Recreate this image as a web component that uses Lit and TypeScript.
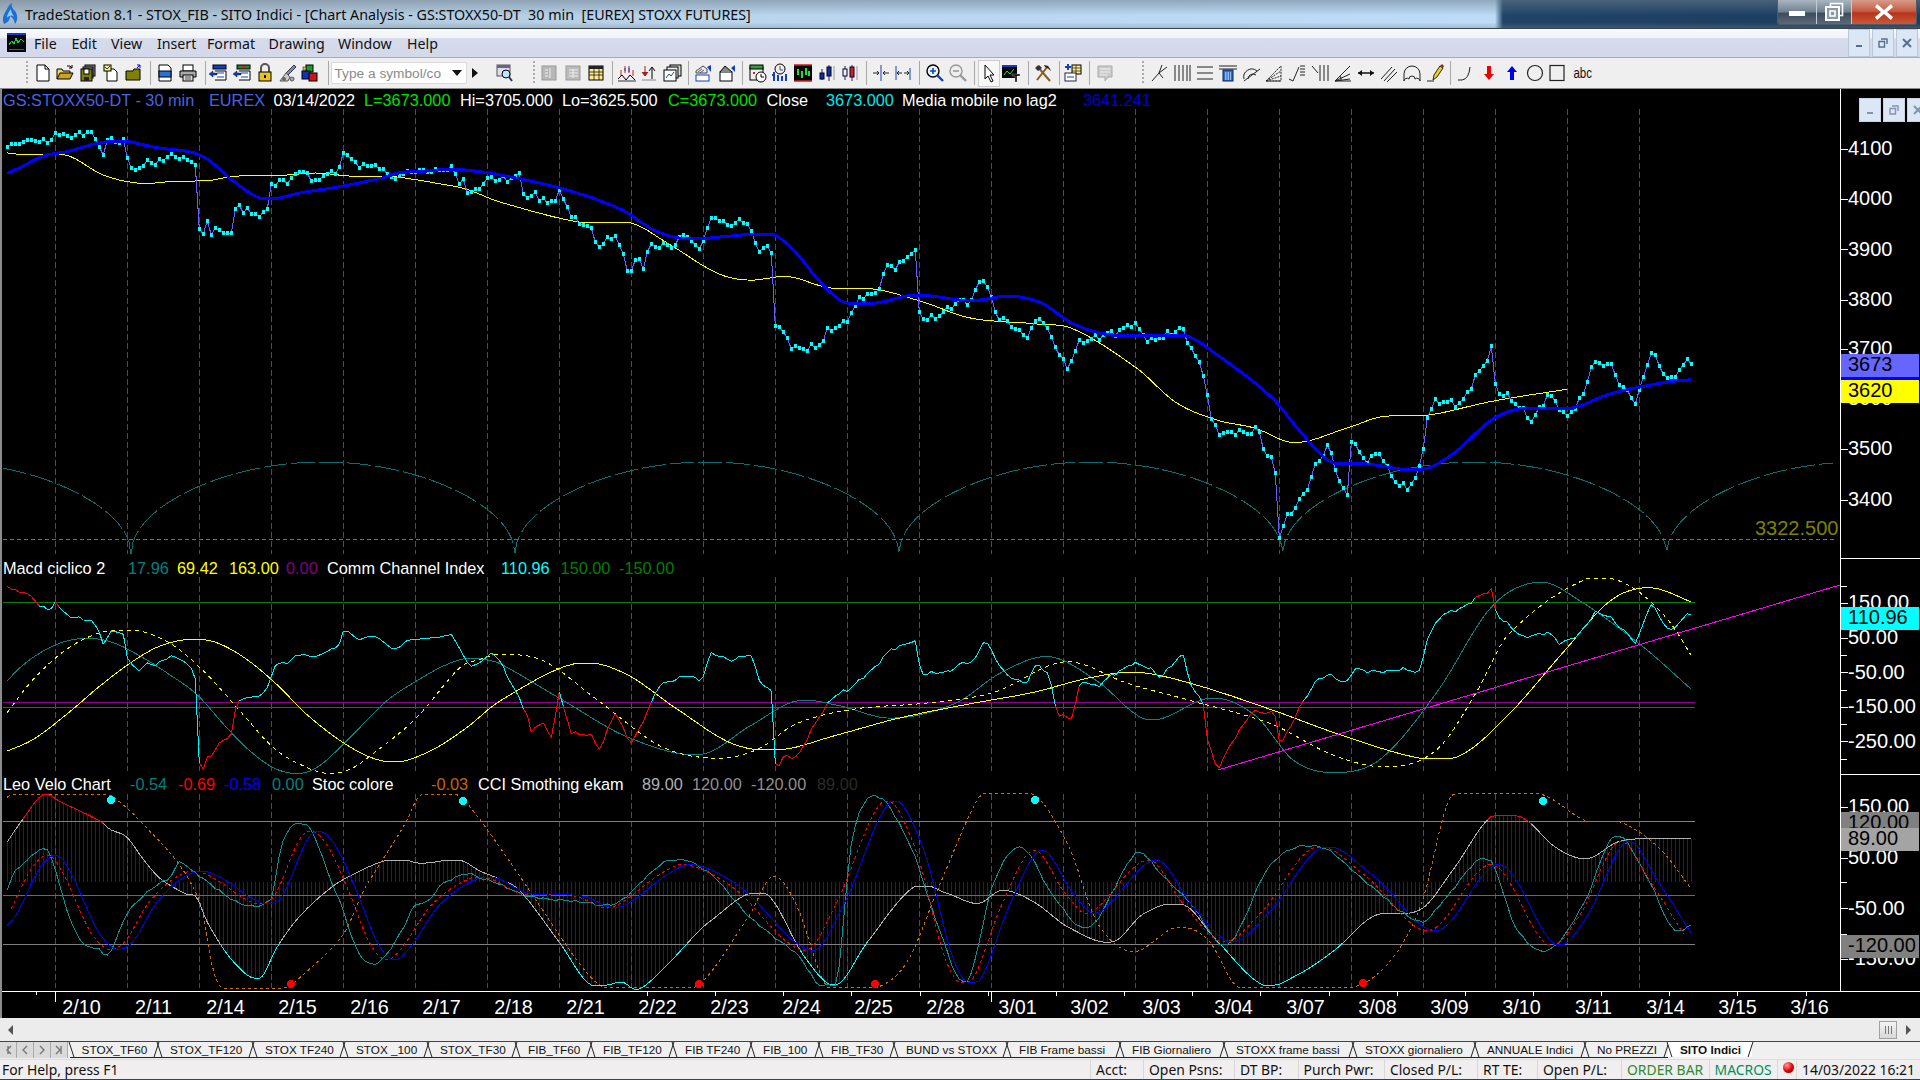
import { LitElement, html, css, svg } from "lit";
import { customElement } from "lit/decorators.js";

type Pt = [number, number];
const P = (s: string): Pt[] => s.trim().split(/\s+/).map((t) => t.split(",").map(Number) as Pt);
const merge = (a: string, base: number, b: string): Pt[] => {
  const A = P(a).map(([x, y]) => [x / 3, base + y / 3] as Pt);
  const last = A[A.length - 1][0];
  const B = P(b).map(([x, y]) => [480 + x / 1.2645, 100 + y / 1.742] as Pt).filter((p) => p[0] > last);
  return [...A, ...B];
};
const noise = (i: number, a: number) => a * (Math.sin(i * 1.7) + 0.6 * Math.sin(i * 3.1 + 1) + 0.4 * Math.sin(i * 7.3));
const resample = (pts: Pt[], smooth: boolean, jitter = 0, jitterFrom = 0): Pt[] => {
  const out: Pt[] = [];
  let k = 0;
  let i = 0;
  for (let x = 3.33; x <= pts[pts.length - 1][0] + 0.01; x += 4, i++) {
    if (x < pts[0][0]) continue;
    while (k < pts.length - 2 && pts[k + 1][0] < x) k++;
    const [x0, y0] = pts[k];
    const [x1, y1] = pts[k + 1];
    const t = (x - x0) / (x1 - x0 || 1);
    let y = y0 + (y1 - y0) * t;
    if (smooth) {
      const prev = pts[Math.max(0, k - 1)];
      const next = pts[Math.min(pts.length - 1, k + 2)];
      const h = x1 - x0;
      const m0 = ((y1 - prev[1]) / (x1 - prev[0] || 1)) * h;
      const m1 = ((next[1] - y0) / (next[0] - x0 || 1)) * h;
      const t2 = t * t;
      const t3 = t2 * t;
      y = (2 * t3 - 3 * t2 + 1) * y0 + (t3 - 2 * t2 + t) * m0 + (-2 * t3 + 3 * t2) * y1 + (t3 - t2) * m1;
      y = Math.min(Math.max(y0, y1), Math.max(Math.min(y0, y1), y));
    }
    if (jitter && x > jitterFrom) y += noise(i, jitter);
    out.push([x, y]);
  }
  return out;
};
const d = (pts: Pt[]) => "M" + pts.map(([x, y]) => `${x.toFixed(1)} ${y.toFixed(1)}`).join("L");
const segs = (pts: Pt[], col: (y: number) => string) => {
  const m = new Map<string, string>();
  for (let i = 0; i < pts.length - 1; i++) {
    const c = col(pts[i][1]);
    m.set(c, (m.get(c) || "") + `M${pts[i][0].toFixed(1)} ${pts[i][1].toFixed(1)}L${pts[i + 1][0].toFixed(1)} ${pts[i + 1][1].toFixed(1)}`);
  }
  return [...m.entries()];
};

/* ---------- price pane ---------- */
const price = resample(
  merge(
    "10,120 22,137 34,130 46,128 58,128 70,122 82,116 94,117 106,120 118,124 130,113 142,126 154,117 166,95 178,102 190,98 202,104 214,111 226,101 238,92 250,104 262,94 274,92 286,113 298,138 310,162 322,118 334,110 346,122 358,125 370,113 382,172 394,201 406,207 418,201 430,194 442,176 454,186 466,192 478,173 490,180 502,168 514,160 526,167 538,174 550,169 562,177 574,184 586,191 598,385 610,398 622,361 634,402 646,380 658,387 670,395 682,395 694,395 706,323 718,311 730,336 742,322 754,338 766,339 778,348 790,332 802,323 814,248 826,254 838,236 850,236 862,248 874,230 886,220 898,212 910,214 922,217 934,240 946,238 958,236 970,225 982,218 994,209 1006,218 1018,197 1030,157 1042,163 1054,173 1066,182 1078,200 1090,190 1102,195 1114,196 1126,193 1138,203 1150,203 1162,220 1174,228 1186,235 1198,225 1210,218 1222,209 1234,212 1246,212 1258,206 1270,206 1282,212 1294,212 1306,204 1318,207 1330,207 1342,207 1354,196 1366,220 1378,250 1390,235 1402,276 1414,273 1426,264 1438,263 1450,250 1462,232 1474,227 1486,240 1498,236",
    100,
    "50,132 58,170 70,162 85,180 100,160 120,208 135,215 150,253 170,232 190,300 200,270 205,295 215,250 240,255 260,230 275,262 295,200 310,215 340,210 350,260 368,255 372,380 395,430 425,432 440,400 460,390 470,365 485,340 500,335 515,290 530,285 550,258 556,375 575,380 600,352 620,350 635,305 655,375 690,410 710,375 725,420 742,468 755,425 780,410 800,405 825,388 850,420 885,395 900,430 915,475 925,560 940,580 985,575 992,610 1005,630 1011,765 1020,725 1045,680 1055,640 1072,600 1085,655 1097,690 1102,585 1115,625 1140,615 1150,650 1172,680 1190,635 1197,555 1210,520 1240,530 1255,490 1268,465 1279,430 1285,505 1310,525 1330,560 1350,510 1375,550 1395,515 1405,458 1430,460 1445,500 1462,525 1480,437 1505,488 1530,448 1536,458"
  ),
  false, 2.6, 500
).map(([x, y]) => [x, Math.round(y)] as Pt);
const blueMA = resample(
  merge(
    "10,222 60,200 130,165 200,152 290,128 370,120 470,140 580,155 630,180 700,240 775,290 830,292 900,276 1020,257 1150,230 1200,215 1280,210 1370,205 1500,222",
    100,
    "110,155 180,190 220,225 260,240 320,235 370,232 400,265 430,315 460,350 500,352 550,338 620,348 670,340 710,352 750,388 800,408 890,408 930,440 1000,515 1040,580 1075,628 1120,632 1190,642 1230,615 1280,555 1320,535 1380,535 1430,510 1500,490 1536,485"
  ),
  true
);
const yellowMA = resample(
  merge(
    "10,154 60,160 200,163 310,222 420,247 520,241 630,238 700,226 860,222 950,216 1060,226 1170,226 1300,245 1400,265 1500,303",
    100,
    "130,212 190,212 240,250 300,300 340,312 390,306 440,325 500,328 560,350 620,378 700,388 750,397 830,465 880,525 930,555 980,570 1030,595 1100,568 1140,550 1200,547 1280,523 1375,502"
  ),
  true
);
const arcPath = () => {
  const pts: Pt[] = [];
  for (let x = 3; x <= 1833; x += 2) {
    const t = (((x - 131) % 383.9) + 383.9) % 383.9 / 383.9;
    pts.push([x, 555 - 94 * Math.pow(Math.sin(Math.PI * t), 0.47)]);
  }
  return d(pts);
};

/* ---------- CCI pane ---------- */
const cci = resample(
  merge(
    "10,85 20,105 35,115 50,116 60,125 75,124 90,132 105,148 115,165 130,165 150,182 165,150 180,172 215,202 240,197 250,207 275,208 295,235 310,280 335,238 350,243 370,250 382,320 395,340 418,360 440,335 465,345 480,330 500,325 515,313 550,330 570,345 585,370 590,440 598,635 610,655 622,618 635,615 660,572 680,565 695,548 705,480 715,450 740,440 780,435 800,415 825,345 845,333 862,338 885,315 915,310 940,320 975,305 995,293 1015,290 1030,240 1045,240 1075,268 1100,258 1130,257 1175,292 1195,292 1220,268 1250,265 1280,262 1320,258 1355,250 1380,295 1410,348 1440,335 1475,305 1500,330",
    550,
    "60,1070 65,1100 78,1080 90,1110 100,1030 115,1100 140,1105 152,1130 170,1065 192,1120 210,1070 225,1020 260,1000 280,1010 292,962 320,975 342,962 355,1015 370,1030 374,1170 385,1140 400,1145 430,1070 445,1040 465,1025 480,1010 500,985 520,955 550,940 558,998 590,995 610,980 625,975 638,938 665,1000 690,1015 705,980 720,1000 730,1070 748,1075 760,1010 780,1020 800,1000 825,980 845,985 860,1005 888,962 900,1020 915,1050 918,1105 932,1165 950,1120 975,1065 1005,1065 1012,1125 1035,1060 1060,1005 1075,1000 1095,1015 1105,990 1140,995 1165,990 1190,995 1195,945 1215,895 1240,885 1255,870 1280,850 1285,895 1320,935 1350,925 1365,945 1390,930 1410,890 1430,900 1462,945 1480,875 1505,925 1530,890 1536,895"
  ),
  false, 1.2, 500
);
const macdTeal = resample(
  merge(
    "10,403 60,350 130,300 200,270 270,262 340,275 420,315 500,365 590,430 680,530 750,600 820,650 890,668 950,650 1030,580 1160,450 1250,390 1330,345 1400,322 1450,325 1500,338",
    550,
    "100,1040 190,1110 280,1138 340,1090 400,1045 450,1052 520,1075 600,1050 660,995 720,968 780,1010 845,1078 925,1040 980,1070 1030,1150 1085,1170 1140,1145 1210,1030 1280,880 1340,838 1390,870 1470,950 1536,1030"
  ),
  true
);
const macdDotted = resample(
  merge(
    "10,500 100,385 200,295 300,245 380,238 440,245 530,290 630,380 720,480 820,590 900,640 980,667 1050,655 1130,600 1250,500 1380,350 1440,325 1500,310",
    550,
    "80,975 150,1045 230,1125 300,1145 350,1130 400,1085 470,1060 570,1048 650,1030 740,977 820,1015 900,1045 1000,1085 1080,1140 1150,1160 1210,1130 1260,1030 1300,930 1400,832 1450,842 1500,900 1536,975"
  ),
  true
);
const macdYellow = resample(
  merge(
    "10,605 100,565 200,490 300,405 400,330 480,285 570,265 650,275 740,325 830,400 920,490 1030,575 1120,622 1200,632 1300,595 1400,530 1500,450",
    550,
    "120,980 180,995 250,1060 320,1120 380,1130 450,1105 530,1075 620,1050 700,1030 770,1005 830,995 900,1015 1000,1060 1090,1105 1190,1145 1240,1140 1300,1070 1370,960 1430,870 1480,848 1536,875"
  ),
  true
);

/* ---------- velo pane ---------- */
const stoc = resample(
  merge(
    "10,95 30,72 130,70 320,70 380,110 420,150 530,270 590,370 610,430 640,600 670,652 850,652 905,615 1030,490 1090,360 1130,295 1220,150 1260,72 1370,70 1420,120 1500,230",
    770,
    "60,1370 130,1510 160,1545 270,1545 340,1420 370,1350 400,1400 440,1545 500,1545 540,1500 580,1370 630,1215 650,1207 700,1207 745,1300 780,1430 825,1482 880,1440 920,1460 960,1545 1100,1545 1150,1500 1190,1400 1230,1207 1340,1207 1400,1255 1440,1255 1490,1300 1536,1380"
  ),
  true
);
const white = resample(
  merge(
    "10,230 65,150 130,70 180,92 300,150 330,175 380,198 430,265 480,322 560,370 590,378 620,450 700,572 780,622 830,530 900,435 1000,345 1080,300 1160,268 1220,268 1260,277 1380,268 1440,300 1500,325",
    770,
    "50,1375 100,1465 140,1540 180,1535 200,1548 240,1500 290,1430 360,1380 410,1490 450,1540 490,1465 550,1368 590,1380 630,1398 660,1375 700,1395 745,1440 800,1465 840,1415 890,1400 930,1460 990,1540 1030,1525 1080,1480 1130,1420 1190,1408 1230,1340 1280,1245 1320,1250 1360,1300 1400,1320 1440,1290 1490,1285 1536,1285"
  ),
  true
);
const veloTeal = resample(
  merge(
    "10,390 40,310 80,270 120,235 150,250 190,380 220,470 260,525 300,535 315,555 340,525 380,430 430,375 480,335 510,320 540,272 570,295 620,330 680,375 750,405 820,375 830,290 860,185 910,157 940,190 990,320 1030,420 1060,510 1090,565 1120,580 1160,550 1210,470 1240,410 1290,385 1320,345 1400,308 1440,320 1500,340",
    770,
    "60,1385 130,1395 170,1400 240,1322 290,1345 340,1420 400,1485 450,1540 470,1290 500,1210 545,1300 580,1440 615,1535 650,1360 685,1300 725,1385 770,1440 830,1310 860,1345 900,1400 945,1470 1000,1330 1060,1298 1120,1360 1190,1430 1220,1390 1275,1320 1310,1440 1350,1480 1395,1400 1435,1280 1475,1350 1510,1445 1536,1430"
  ),
  true, 0.7
);
const veloBlueRaw = merge(
  "10,475 50,430 120,290 170,253 210,300 260,410 300,490 350,535 400,510 470,395 550,320 610,300 680,330 760,385 810,398 850,370 920,210 960,180 1010,230 1070,360 1130,510 1180,567 1230,530 1320,400 1440,320 1500,325",
  770,
  "60,1380 130,1385 175,1405 240,1345 270,1330 330,1370 420,1480 460,1400 520,1220 560,1300 600,1500 630,1535 670,1400 710,1305 750,1380 780,1415 855,1322 900,1400 950,1465 1000,1410 1065,1300 1130,1350 1210,1445 1290,1330 1360,1470 1400,1420 1450,1290 1490,1360 1536,1460"
);
const veloBlue = resample(veloBlueRaw, true);
const veloRed = resample(veloBlueRaw.map(([x, y]) => [x - 8, y] as Pt).filter((p) => p[0] > 3), true);

/* ---------- toolbar icons ---------- */
const S = "#000";
const icons: Record<string, any> = {
  new: svg`<path d="M4 2h8l4 4v12H4z" fill="#fff" stroke="${S}"/><path d="M12 2v4h4" fill="none" stroke="${S}"/>`,
  open: svg`<path d="M2 16V6h5l1 2h7v2" fill="#f4d35e" stroke="${S}"/><path d="M2 16l3-6h13l-3 6z" fill="#c9a227" stroke="${S}"/><path d="M12 3h3l2 2M17 2v3h-3" fill="none" stroke="${S}"/>`,
  saveall: svg`<rect x="7" y="2" width="10" height="11" fill="#888" stroke="${S}"/><rect x="5" y="4" width="10" height="11" fill="#999" stroke="${S}"/><rect x="3" y="6" width="11" height="12" fill="#808000" stroke="${S}"/><rect x="6" y="6" width="5" height="5" fill="#fff" stroke="${S}"/><rect x="6" y="14" width="5" height="4" fill="#222"/>`,
  docchk: svg`<path d="M6 6h7l3 3v9H6z" fill="#fff" stroke="${S}"/><rect x="3" y="2" width="7" height="6" fill="#ffe98a" stroke="${S}"/><path d="M4 4l2 2 3-3" fill="none" stroke="#060"/>`,
  box: svg`<path d="M2 8h7l1-2h6v11H2z" fill="#808000" stroke="${S}"/><path d="M13 5l3-3M16 2v3M16 2h-3" stroke="#00f" fill="none"/>`,
  preview: svg`<path d="M4 2h9l3 3v13H4z" fill="#fff" stroke="${S}"/><rect x="4" y="8" width="12" height="6" fill="#2a6fd6" stroke="${S}"/>`,
  print: svg`<rect x="5" y="2" width="10" height="6" fill="#fff" stroke="${S}"/><path d="M2 8h16v6H2z" fill="#aaa" stroke="${S}"/><rect x="5" y="12" width="10" height="6" fill="#ddd" stroke="${S}"/><path d="M7 14h6M7 16h6" stroke="#555"/>`,
  winl: svg`<rect x="5" y="2" width="13" height="4" fill="#1040c0" stroke="${S}"/><path d="M7 8h11v9H7" fill="#fff" stroke="${S}"/><path d="M9 10h7M9 14h7" stroke="#1040c0"/><path d="M1 11l4-3v2h4v2H5v2z" fill="#1040c0" stroke="${S}" stroke-width=".4"/>`,
  winr: svg`<rect x="5" y="2" width="13" height="4" fill="#1a8a30" stroke="${S}"/><rect x="10" y="3" width="4" height="2" fill="#e02020"/><path d="M7 8h11v9H7" fill="#fff" stroke="${S}"/><path d="M9 10h7M9 14h7" stroke="#1040c0"/><path d="M1 11l4-3v2h4v2H5v2z" fill="#1040c0" stroke="${S}" stroke-width=".4"/>`,
  lock: svg`<path d="M6 9V5a4 4 0 0 1 8 0v4" fill="none" stroke="#555" stroke-width="2"/><rect x="4" y="9" width="12" height="9" fill="#e8c020" stroke="${S}"/><rect x="9" y="12" width="2" height="3" fill="#000"/>`,
  wrench: svg`<path d="M2 18l6-8 4 4-2 4z" fill="#ccc" stroke="#555"/><path d="M8 10l8-8 2 2-8 8" fill="#88a" stroke="#335"/><circle cx="6" cy="16" r="2" fill="#666"/><circle cx="14" cy="16" r="2" fill="#aaa" stroke="#555"/>`,
  cubes: svg`<rect x="6" y="2" width="7" height="7" fill="#1a9a2a" stroke="${S}"/><rect x="2" y="8" width="8" height="8" fill="#1030c0" stroke="${S}"/><rect x="9" y="10" width="8" height="8" fill="#d01020" stroke="${S}"/><rect x="3" y="4" width="3" height="3" fill="#f0d000" stroke="${S}" stroke-width=".5"/>`,
  find: svg`<rect x="3" y="2" width="13" height="11" fill="#dde" stroke="#555"/><rect x="3" y="2" width="13" height="3" fill="#668"/><circle cx="12" cy="11" r="4" fill="#bfe4ff" stroke="${S}"/><path d="M15 14l3 4" stroke="#336" stroke-width="2"/>`,
  grayd: svg`<rect x="3" y="3" width="14" height="14" fill="#b8b8b8" stroke="#999"/><path d="M11 5v10M6 7h3M6 10h3M6 13h3" stroke="#eee"/>`,
  grayt: svg`<rect x="3" y="3" width="14" height="14" fill="#bbb" stroke="#999"/><path d="M6 7h9M6 10h9M6 13h9M10 6v9" stroke="#eee"/>`,
  tbl: svg`<rect x="3" y="3" width="14" height="14" fill="#ffe98a" stroke="${S}"/><rect x="3" y="3" width="14" height="3" fill="#222"/><path d="M3 9h14M3 12h14M8 6v11M13 6v11" stroke="${S}" stroke-width=".7"/>`,
  chartw: svg`<path d="M4 7v6M8 3v7M12 5v5M16 7v6" stroke="#d02020"/><path d="M8 5v3M12 3v6" stroke="#1040c0"/><path d="M1 16l4-4 4 5 4-5 5 5" fill="none" stroke="${S}"/><path d="M1 18h18" stroke="#333"/>`,
  updn: svg`<path d="M5 3v9M2 9l3 4 3-4" fill="#a02020" stroke="#a02020"/><path d="M12 16V5M9 8l3-4 3 4" fill="none" stroke="#000"/><path d="M2 17h14" stroke="#888"/>`,
  stack: svg`<rect x="7" y="2" width="11" height="11" fill="#ddd" stroke="${S}"/><rect x="4" y="4" width="11" height="11" fill="#eee" stroke="${S}"/><rect x="1" y="7" width="12" height="11" fill="#fff" stroke="${S}"/><path d="M3 15l3-4 2 2 3-4" fill="none" stroke="#1040c0"/>`,
  wina: svg`<path d="M3 8l7-5 4 3v4H3z" fill="#eee" stroke="#444"/><path d="M5 9l4-3M7 10l4-3" stroke="#555"/><rect x="3" y="12" width="13" height="6" fill="#fff" stroke="#1040c0"/><path d="M14 4l4-2v7z" fill="#1040c0"/>`,
  winb: svg`<rect x="3" y="9" width="12" height="9" fill="#fff" stroke="${S}"/><path d="M3 9l5-6 7 6" fill="#888" stroke="${S}"/><path d="M14 5l4-3v7z" fill="#1040c0"/>`,
  cal: svg`<rect x="2" y="4" width="13" height="13" fill="#eee" stroke="${S}"/><rect x="2" y="2" width="13" height="4" fill="#2e9e3a" stroke="${S}"/><path d="M5 9l2 2M7 9l-2 2" stroke="#d02020"/><circle cx="13" cy="14" r="5" fill="#fff" stroke="${S}"/><path d="M13 11v3h3" stroke="${S}" fill="none"/>`,
  magbars: svg`<circle cx="10" cy="6" r="5" fill="#eee" stroke="${S}"/><path d="M10 3v4h3" stroke="#555" fill="none"/><path d="M4 9v9M4 12h-2M8 12v6M12 13v5M16 11v7" stroke="#1040c0" stroke-width="2"/>`,
  blk: svg`<rect x="1" y="2" width="18" height="16" fill="#000"/><path d="M1 2h18M1 18h18" stroke="#d02020" stroke-width="1.4"/><path d="M5 6v6M9 8v7M13 5v7M16 8v5" stroke="#20e040" stroke-width="2"/>`,
  cand1: svg`<path d="M13 2v16" stroke="#224" /><rect x="11" y="4" width="4" height="9" fill="#1030a0" stroke="#002"/><path d="M6 6v11" stroke="#224"/><rect x="4" y="10" width="4" height="6" fill="#1030a0" stroke="#002"/><path d="M18 3v14" stroke="#999"/>`,
  cand2: svg`<path d="M6 3v14M13 2v16" stroke="#224"/><rect x="4" y="6" width="4" height="7" fill="#f0f0f0" stroke="#003"/><rect x="11" y="4" width="4" height="10" fill="#d02020" stroke="#003"/><path d="M18 3v14" stroke="#999"/>`,
  pinch: svg`<path d="M10 2v16" stroke="#1040c0"/><path d="M2 10h6M6 8l2 2-2 2M18 10h-6M14 8l-2 2 2 2" fill="none" stroke="#222"/>`,
  spread: svg`<path d="M3 3v14M17 5v12" stroke="#1040c0"/><path d="M4 10h5M6 8l-2 2 2 2M11 10h5M14 8l2 2-2 2" fill="none" stroke="#222"/>`,
  zin: svg`<circle cx="8" cy="8" r="6" fill="#e8f4ff" stroke="${S}" stroke-width="1.4"/><path d="M5 8h6M8 5v6" stroke="#1040c0" stroke-width="1.6"/><path d="M12 12l6 6" stroke="#1040c0" stroke-width="2.4"/>`,
  zout: svg`<circle cx="8" cy="8" r="6" fill="#eee" stroke="#999" stroke-width="1.4"/><path d="M5 8h6" stroke="#999" stroke-width="1.6"/><path d="M12 12l6 6" stroke="#999" stroke-width="2.4"/>`,
  arrow: svg`<path d="M6 2v14l3-3 3 6 2-1-3-6h4z" fill="#fff" stroke="${S}"/>`,
  chartT: svg`<rect x="1" y="2" width="15" height="13" fill="#000"/><rect x="1" y="2" width="15" height="2" fill="#1040c0"/><path d="M3 12l3-4 3 3 4-5" fill="none" stroke="#20e040"/><path d="M11 11h8v2h-3v6h-2v-6h-3z" fill="#111" stroke="#fff" stroke-width=".3"/>`,
  hammer: svg`<path d="M4 3l13 15" stroke="#8a5a20" stroke-width="2"/><path d="M15 3L4 17" stroke="#8a5a20" stroke-width="2"/><path d="M2 5l4-3 3 3-4 3z" fill="#333"/><path d="M11 2q5 0 7 6-3-3-6-4z" fill="#222"/>`,
  addtbl: svg`<path d="M5 1v6M2 4h6" stroke="#1040c0" stroke-width="2"/><rect x="9" y="2" width="9" height="9" fill="#ffe98a" stroke="${S}"/><path d="M9 5h9M9 8h9M13 2v9" stroke="${S}" stroke-width=".6"/><rect x="2" y="10" width="11" height="8" fill="#fff" stroke="#224"/><path d="M4 14h7" stroke="#1040c0"/>`,
  note: svg`<path d="M3 3h14v11h-4l-3 4v-4H3z" fill="#ccc" stroke="#aaa"/><path d="M5 6h10M5 9h10M5 12h7" stroke="#eee"/>`,
  fork: svg`<path d="M2 18l7-8M9 10L12 2M9 10l8-6M9 10l4 5" fill="none" stroke="#222"/>`,
  vlines: svg`<path d="M3 2v16M7 2v16M11 2v16M15 2v16M18 2v16" stroke="#222"/>`,
  hlines: svg`<path d="M2 4h16M2 10h16M2 16h16" stroke="#222" stroke-width="1.2"/>`,
  calc: svg`<path d="M1 3h18M1 6h18" stroke="#222"/><rect x="5" y="7" width="10" height="11" fill="#2a6fd6" stroke="#124"/><path d="M7 10h6M7 12h6M7 14h6M7 16h6" stroke="#fff" stroke-dasharray="1.5 1"/>`,
  arc: svg`<path d="M2 16a8 8 0 0 1 13-8M6 16a5 5 0 0 1 8-4M2 18L18 6" fill="none" stroke="#222"/>`,
  tri: svg`<path d="M2 18L17 3v15zM2 18l15-5M2 18l15-10M2 18h15" fill="none" stroke="#222" stroke-dasharray="2 1"/>`,
  retr: svg`<path d="M2 16l4 2 6-14M13 3h5M13 6h5M13 9h5M13 12h5" fill="none" stroke="#222"/>`,
  spk: svg`<path d="M2 3l6 7M10 2v16M14 2v16M18 2v16" stroke="#222" fill="none"/>`,
  fan: svg`<path d="M2 18L17 3M2 18l15-7M2 18l15-2M2 18h16" fill="none" stroke="#222"/><path d="M8 18a7 7 0 0 0-1-5" stroke="#222" fill="none"/>`,
  lr: svg`<path d="M2 10h16" stroke="#111" stroke-width="1.5"/><path d="M2 10l4-3v6zM18 10l-4-3v6z" fill="#111"/>`,
  par: svg`<path d="M2 16L13 4M5 18L16 6M8 19L18 9" stroke="#222"/>`,
  arcs: svg`<path d="M2 18V11a8 8 0 0 1 16 0v7" fill="none" stroke="#222"/><path d="M2 18a3 3 0 0 1 5-2 3 3 0 0 1 6 0 3 3 0 0 1 5 2" fill="none" stroke="#222"/>`,
  pen: svg`<path d="M2 18h7" stroke="#222"/><path d="M8 17l1-5 6-9 3 2-6 9z" fill="#f0d020" stroke="#222"/><path d="M15 3l3 2 1-2-2-2z" fill="#a02020"/>`,
  curve: svg`<path d="M2 17h4q7-1 8-13" fill="none" stroke="#222"/>`,
  down: svg`<path d="M8 3h4v8h3l-5 6-5-6h3z" fill="#f00000"/>`,
  up: svg`<path d="M8 17h4V9h3l-5-6-5 6h3z" fill="#0000f0"/>`,
  circle: svg`<circle cx="10" cy="10" r="7.5" fill="none" stroke="#222" stroke-width="1.2"/>`,
  square: svg`<rect x="3" y="2.5" width="14" height="15" fill="none" stroke="#222" stroke-width="1.2"/>`,
};

const toolbar: [string, number][] = [
  ["new", 43], ["open", 65], ["saveall", 88], ["docchk", 111], ["box", 134], ["|", 150],
  ["preview", 165], ["print", 188], ["|", 205],
  ["winl", 218], ["winr", 242], ["lock", 265], ["wrench", 288], ["cubes", 310], ["|", 328],
];
const toolbar2: [string, number][] = [
  ["find", 504], [":", 534],
  ["grayd", 549], ["grayt", 573], ["tbl", 596], ["|", 612],
  ["chartw", 627], ["updn", 650], ["stack", 672.6], ["|", 689],
  ["wina", 703], ["winb", 727], ["|", 743],
  ["cal", 757.6], ["magbars", 780], ["blk", 803], ["cand1", 826], ["cand2", 849], ["|", 866.5],
  ["pinch", 881], ["spread", 903], ["|", 920],
  ["zin", 935], ["zout", 958], ["|", 975],
  ["arrow*", 989], ["chartT", 1011], ["|", 1028.6],
  ["hammer", 1043], ["|", 1059.6], ["addtbl", 1073.5], ["|", 1090], ["note", 1105], [":", 1143],
  ["fork", 1160], ["vlines", 1181.6], ["hlines", 1205], ["calc", 1228], ["arc", 1252], ["tri", 1274], ["retr", 1297], ["spk", 1319.6], ["fan", 1343], ["lr", 1365.7], ["par", 1389], ["arcs", 1412], ["pen", 1435], ["|", 1451],
  ["curve", 1466], ["down", 1489], ["up", 1512.6], ["circle", 1535], ["square", 1557.6],
];

const legend1: [string, number, string][] = [
  ["GS:STOXX50-DT - 30 min", 3, "#4a62e0"], ["EUREX", 209, "#4a62e0"], ["03/14/2022", 273.5, "#fff"],
  ["L=3673.000", 364, "#00e000"], ["Hi=3705.000", 460, "#fff"], ["Lo=3625.500", 562, "#fff"],
  ["C=3673.000", 668, "#00e000"], ["Close", 766.5, "#fff"], ["3673.000", 826, "#00e8e8"],
  ["Media mobile no lag2", 902, "#fff"], ["3641.241", 1083, "#0000d0"],
];
const legend2: [string, number, string][] = [
  ["Macd ciclico 2", 3, "#fff"], ["17.96", 128, "#008080"], ["69.42", 177, "#ffff00"], ["163.00", 229, "#ffff00"],
  ["0.00", 286, "#800080"], ["Comm Channel Index", 327, "#fff"], ["110.96", 501, "#00ffff"],
  ["150.00", 560.6, "#008000"], ["-150.00", 619, "#008000"],
];
const legend3: [string, number, string][] = [
  ["Leo Velo Chart", 3, "#fff"], ["-0.54", 130, "#008080"], ["-0.69", 178, "#ff0000"], ["-0.58", 224, "#0000ff"],
  ["0.00", 272, "#008080"], ["Stoc colore", 312, "#fff"], ["-0.03", 431, "#c86400"],
  ["CCI Smothing ekam", 478, "#fff"], ["89.00", 642, "#b0b0b0"], ["120.00", 692, "#909090"],
  ["-120.00", 751, "#909090"], ["89.00", 817, "#2a2a2a"],
];
const dates = ["2/10","2/11","2/14","2/15","2/16","2/17","2/18","2/21","2/22","2/23","2/24","2/25","2/28","3/01","3/02","3/03","3/04","3/07","3/08","3/09","3/10","3/11","3/14","3/15","3/16"];
const tabs: [string, number][] = [["STOX_TF60", 81.6], ["STOX_TF120", 170], ["STOX TF240", 265], ["STOX _100", 356], ["STOX_TF30", 440], ["FIB_TF60", 528], ["FIB_TF120", 603], ["FIB TF240", 685], ["FIB_100", 763], ["FIB_TF30", 831], ["BUND vs STOXX", 906], ["FIB Frame bassi", 1019], ["FIB Giornaliero", 1132], ["STOXX frame bassi", 1236], ["STOXX giornaliero", 1365], ["ANNUALE Indici", 1487], ["No PREZZI", 1597], ["SITO Indici", 1680]];
const status: [string, number, string][] = [
  ["Acct:", 1090, ""], ["Open Psns:", 1143, ""], ["DT BP:", 1234, ""], ["Purch Pwr:", 1297.5, ""], ["Closed P/L:", 1384, ""],
  ["RT TE:", 1477, ""], ["Open P/L:", 1537, ""], ["ORDER BAR", 1621, "ob"], ["MACROS", 1708.6, "mc"], ["•", 1777, "dot"], ["14/03/2022 16:21", 1796, ""],
];

const grid = (y0: number, y1: number) => {
  let s = "";
  for (let i = 0; i < 23; i++) s += `M${55 + 72 * i} ${y0}V${y1}`;
  return s;
};
const axisLabel = (t: string, y: number, fill = "#fff") => svg`<text class="ax" x="1848" y="${y + 6}" fill="${fill}">${t}</text>`;
const tick = (y: number, len = 7) => `M1841 ${y}h${len}`;
const flag = (y0: number, y1: number, fill: string) => svg`<rect x="1841" y="${y0}" width="78" height="${y1 - y0}" fill="${fill}"/>`;

@customElement("app-root")
export class AppRoot extends LitElement {
  static styles = css`
    :host { display: block; width: 1920px; height: 1080px; overflow: hidden; background: #000; font-family: "Liberation Sans", Arial, sans-serif; }
    .app { display: flex; flex-direction: column; width: 1920px; height: 1080px; }
    .title { height: 28px; flex: none; display: flex; align-items: center; border-bottom: 1px solid #39434e; box-sizing: content-box;
      background:
        linear-gradient(180deg, rgba(110,125,140,.55) 0, rgba(190,205,220,.0) 55%, rgba(120,130,140,.0) 80%, rgba(120,130,140,.35) 100%),
        linear-gradient(90deg, #a9bbcb 0, #b2c9dc 320px, #b9d6ef 760px, #bcdcf7 1495px, #1f4468 1503px, #1c3c5e 1920px); }
    .logo { margin: 0 6px 0 1px; flex: none; }
    .tt { font: 14.3px "Noto Sans", "Open Sans", sans-serif; color: #0b0b0b; white-space: pre; flex: 1; }
    .wbtns { display: flex; align-self: flex-start; height: 24px; margin-right: 3px; border: 1px solid #4d5a68; border-top: 0; border-radius: 0 0 3px 3px; overflow: hidden; }
    .wb { display: flex; align-items: center; justify-content: center; width: 38px; background: linear-gradient(180deg,#a9b5c0,#6f8090 50%,#3d4c5a 55%,#5a6a78); border-right: 1px solid #c0ccd8; }
    .wb.mx { width: 34px; }
    .wb.cl { width: 64px; border: 0; background: linear-gradient(180deg,#d89a8a,#c65f45 45%,#b8341a 55%,#c9583a); }
    .menu { height: 28px; flex: none; display: flex; align-items: center; position: relative; border-bottom: 1px solid #a6abb8;
      background: linear-gradient(180deg,#f8f9fb 0,#f3f4f8 30%,#d6dbec 35%,#d3d9ea 100%); }
    .micon { position: absolute; left: 7px; top: 4px; }
    .mi { font: 14.2px "Noto Sans", "Open Sans", sans-serif; color: #111; }
    .mdi { margin-left: auto; display: flex; gap: 2px; padding-right: 2px; height: 100%; }
    .mb { width: 22px; background: #dce7f5; border: 1px solid #bcc8da; box-sizing: border-box; display: flex; align-items: center; justify-content: center; }
    .toolbar { height: 30px; flex: none; display: flex; align-items: center; background: #efefef; border-bottom: 1px solid #8a8a8a; box-sizing: content-box; }
    .tb { width: 20px; height: 20px; flex: none; display: flex; align-items: center; justify-content: center; }
    .tb svg { display: block; }
    .sep { width: 1px; height: 24px; flex: none; background: #a8a8a8; }
    .grip { width: 2px; height: 24px; flex: none; background: repeating-linear-gradient(180deg,#aaa 0 2px,transparent 2px 4px); }
    .pressed { width: 22px; height: 27px; background: #f8f8f8; border: 1px solid #ccc; box-sizing: border-box; }
    .combo { width: 136px; height: 22px; flex: none; margin-left: 2px; background: #fff; border: 1px solid #dadada; border-radius: 2px; box-sizing: border-box; display: flex; align-items: center; padding-left: 3px; font-size: 13.7px; color: #8a8a8a; position: relative; white-space: nowrap; }
    .combo i { position: absolute; right: 4px; top: 7px; width: 0; height: 0; border: 5px solid transparent; border-top: 6px solid #111; border-bottom: 0; }
    .play { width: 0; height: 0; flex: none; margin-left: 5px; border-left: 6px solid #111; border-top: 5px solid transparent; border-bottom: 5px solid transparent; }
    .abc { font: 11.5px "Liberation Sans", sans-serif; color: #111; flex: none; margin-left: 6px; transform: scaleY(1.2); }
    .chart { height: 929px; flex: none; position: relative; background: #000; border-left: 2px solid #8c8c8c; }
    .pane { position: relative; display: block; overflow: hidden; }
    .pane svg { display: block; }
    .p1 { height: 470px; } .p2, .p3 { height: 216px; }
    text { font-family: "Liberation Sans", Arial, sans-serif; }
    .ax { font-size: 20px; }
    .legend { position: absolute; left: 0; top: -1px; display: flex; font-size: 16.3px; white-space: nowrap; line-height: 20px; padding-left: 1px; }
    .p1 .legend { line-height: 24px; }
    .legend span { flex: none; }
    .sub { position: absolute; top: 9px; right: -9px; display: flex; gap: 2px; }
    .sub div { width: 22px; height: 24px; background: #dce7f5; border: 1px solid #c6d2e2; box-sizing: border-box; display: flex; align-items: center; justify-content: center; }
    .time { height: 27px; position: relative; border-top: 1px solid #fff; display: flex; padding-left: 43.6px; padding-top: 3px; font-size: 19.8px; line-height: 24px; color: #fff; box-sizing: border-box; }
    .time span { width: 72px; flex: none; text-align: center; position: relative; }
    .time svg { position: absolute; left: 0; top: 0; }
    .scroll { height: 23px; flex: none; background: #ececec; display: flex; align-items: center; padding: 0 9px 0 8px; }
    .tri { width: 0; height: 0; border-top: 5px solid transparent; border-bottom: 5px solid transparent; }
    .tri.l { border-right: 5px solid #555; } .tri.r { border-left: 5px solid #555; }
    .thumb { margin-left: auto; margin-right: 9px; width: 18px; height: 18px; background: linear-gradient(180deg,#f4f4f4,#d8d8d8); border: 1px solid #a0a0a0; box-sizing: border-box; display: flex; align-items: center; justify-content: center; gap: 2px; }
    .thumb i { width: 1px; height: 8px; background: #777; }
    .tabs { height: 17px; flex: none; display: flex; background: #f0f0f0; border-top: 1px solid #444; font-size: 11.75px; line-height: 15px; color: #111; white-space: nowrap; }
    .nav { display: flex; width: 69.85px; flex: none; }
    .nav b { width: 17px; height: 16px; background: #dadada; border-right: 1px solid #aaa; box-sizing: border-box; display: flex; align-items: center; justify-content: center; }
    .tab { position: relative; padding: 0 0 0 11.75px; border-bottom: 1px solid #222; flex: none; height: 15px; box-sizing: content-box; }
    .tab::before, .tab::after { content: ""; position: absolute; top: 0; width: 1px; height: 15px; background: #222; }
    .tab::before { left: 1px; transform: skewX(18deg); }
    .tab::after { right: 1px; transform: skewX(-18deg); }
    .tab.on { font-weight: bold; background: #fff; border-bottom: 0; }
    .status { height: 19px; flex: none; display: flex; align-items: center; background: #f0eeee; border-top: 1px solid #ddd; font: 13.9px "Noto Sans", "Open Sans", sans-serif; color: #111; white-space: nowrap; }
    .help { width: 1090px; flex: none; padding-left: 2px; box-sizing: border-box; }
    .cell { flex: none; box-sizing: border-box; padding-left: 5px; border-left: 1px solid #d8d8d8; height: 100%; display: flex; align-items: center; overflow: hidden; }
    .ob { color: #2e8a2e; } .mc { color: #008f5a; }
    .dotc { width: 11px; height: 11px; border-radius: 50%; margin-top: -5px; background: radial-gradient(circle at 35% 30%, #ff9a9a, #e00000 55%, #700000); }
    .foot { flex: 1; background: #c6d2df; border-top: 1px solid #38424e; }
  `;

  private legend(items: [string, number, string][]) {
    return html`<div class="legend">${items.map(([t, x, c], i) => {
      const next = items[i + 1] ? items[i + 1][1] : x + 90;
      return html`<span style="width:${next - x}px;color:${c}">${t}</span>`;
    })}</div>`;
  }

  private tbItems(items: [string, number][], startX: number) {
    let cur = startX;
    return items.map(([n, x]) => {
      const w = n === "|" ? 1 : n === ":" ? 2 : n === "arrow*" ? 22 : 20;
      const left = x - w / 2;
      const m = left - cur;
      cur = left + w;
      const st = `margin-left:${m}px`;
      if (n === "|") return html`<div class="sep" style="${st}"></div>`;
      if (n === ":") return html`<div class="grip" style="${st}"></div>`;
      if (n === "arrow*") return html`<div class="tb pressed" style="${st}"><svg width="20" height="20" viewBox="0 0 20 20">${icons.arrow}</svg></div>`;
      return html`<div class="tb" style="${st}"><svg width="20" height="20" viewBox="0 0 20 20">${icons[n]}</svg></div>`;
    });
  }

  private pricePane() {
    const markers = price.map(([x, y]) => `M${(x - 1.5).toFixed(0)} ${y - 2}h3v4h-3z`).join("");
    const labels: [string, number][] = [["4100", 148], ["4000", 198], ["3900", 248.5], ["3800", 299], ["3700", 348], ["3600", 398], ["3500", 448.3], ["3400", 499]];
    return svg`<svg width="1918" height="470" viewBox="2 88 1918 470" shape-rendering="crispEdges">
      <path d="${grid(108, 553)}" stroke="#4c4c4c" stroke-dasharray="6 3" fill="none"/>
      <path d="${arcPath()}" stroke="#0b6f6f" stroke-dasharray="24 4" fill="none"/>
      <path d="M3 538H1835" stroke="#808000" stroke-dasharray="4 3" fill="none"/>
      <text class="ax" x="1755" y="534" fill="#808000">3322.500</text>
      <path d="${d(yellowMA)}" stroke="#ffff00" fill="none"/>
      <path d="${d(price)}" stroke="#6a5cff" fill="none"/>
      <path d="${markers}" fill="#00ffff"/>
      <path d="${d(blueMA)}" stroke="#0000ff" stroke-width="3" fill="none"/>
      <path d="M1840.5 88V558" stroke="#fff"/>
      <path d="M1840 557.5H1920" stroke="#fff"/>
      <path d="${labels.map(([, y]) => tick(y)).join("")}" stroke="#fff"/>
      ${labels.map(([t, y]) => axisLabel(t, y))}
      ${flag(367, 389, "#0000ff")}
      ${flag(353, 376, "#6666ff")}${axisLabel("3673", 364, "#000")}
      ${flag(379, 402, "#ffff00")}${axisLabel("3620", 390, "#000")}
    </svg>`;
  }

  private cciPane() {
    const labels: [string, number][] = [["150.00", 602], ["50.00", 637], ["-50.00", 671.7], ["-150.00", 706], ["-250.00", 740.6]];
    const minors = [585, 620, 654, 689, 723, 758];
    return svg`<svg width="1918" height="216" viewBox="2 558 1918 216" shape-rendering="crispEdges">
      <path d="${grid(576, 770)}" stroke="#4c4c4c" stroke-dasharray="6 3" fill="none"/>
      <path d="M3 601.5H1695M3 706.5H1695" stroke="#0a800a" fill="none"/>
      <path d="M3 701.5H1695" stroke="#900090" fill="none"/>
      <path d="${d(macdTeal)}" stroke="#0f8080" fill="none"/>
      <path d="${d(macdDotted)}" stroke="#ffff00" stroke-dasharray="4 4" fill="none"/>
      <path d="${d(macdYellow)}" stroke="#ffff00" fill="none"/>
      <path d="M1218 769L1840 584" stroke="#ff00ff" fill="none"/>
      ${segs(cci, (y) => (y < 602 || y > 702.5 ? "#ff0000" : "#00f0f8")).map(([c, p]) => svg`<path d="${p}" stroke="${c}" fill="none"/>`)}
      <path d="M1840.5 558V774" stroke="#fff"/>
      <path d="M1840 773.5H1920" stroke="#fff"/>
      <path d="${labels.map(([, y]) => tick(y)).join("") + minors.map((y) => tick(y, 6)).join("")}" stroke="#fff"/>
      ${labels.map(([t, y]) => axisLabel(t, y))}
      ${flag(606, 629, "#00ffff")}${axisLabel("110.96", 617, "#000")}
    </svg>`;
  }

  private veloPane() {
    const hist = white.map(([x, y]) => `M${x.toFixed(0)} 881V${y.toFixed(0)}`).join("");
    const dots: Pt[] = [[111, 799], [463, 800], [1035, 799], [1543, 800]];
    const reds: Pt[] = [[291, 983], [699, 983], [875, 983], [1363, 982]];
    const labels: [string, number][] = [["150.00", 806], ["50.00", 857], ["-50.00", 907.5], ["-150.00", 958]];
    return svg`<svg width="1918" height="216" viewBox="2 774 1918 216" shape-rendering="crispEdges">
      <path d="${hist}" stroke="#262626" fill="none"/>
      <path d="${grid(793, 987)}" stroke="#4c4c4c" stroke-dasharray="6 3" fill="none"/>
      <path d="M3 820.5H1695M3 943.5H1695" stroke="#808080" fill="none"/>
      <path d="M3 894.5H1695" stroke="#0f9090" fill="none"/>
      <path d="${d(stoc)}" stroke="#d06c00" stroke-dasharray="3 3" fill="none"/>
      ${segs(white, (y) => (y < 820.5 ? "#ff0000" : y > 943 ? "#00ffff" : "#b0b0b0")).map(([c, p]) => svg`<path d="${p}" stroke="${c}" fill="none"/>`)}
      <path d="${d(veloTeal)}" stroke="#0f8f8f" fill="none"/>
      <path d="${d(veloRed)}" stroke="#ff0000" stroke-dasharray="3 3" fill="none"/>
      <path d="${d(veloBlue)}" stroke="#0000ff" fill="none"/>
      ${dots.map(([x, y]) => svg`<circle cx="${x}" cy="${y}" r="4" fill="#00ffff"/>`)}
      ${reds.map(([x, y]) => svg`<circle cx="${x}" cy="${y}" r="4" fill="#ff0000"/>`)}
      <path d="M1840.5 774V990" stroke="#fff"/>
      <path d="${labels.map(([, y]) => tick(y)).join("") + tick(881, 6) + tick(933, 6)}" stroke="#fff"/>
      ${labels.map(([t, y]) => axisLabel(t, y))}
      ${flag(811, 834, "#808080")}${axisLabel("120.00", 822, "#000")}
      ${flag(827, 850, "#a4a4a4")}${axisLabel("89.00", 838, "#000")}
      ${flag(934, 957, "#808080")}${axisLabel("-120.00", 945, "#000")}
    </svg>`;
  }

  private timeTicks() {
    let p = "M34 0v3M53 0v10M989 0v10";
    for (let x = 645; x < 1810; x += 68.15) p += `M${x.toFixed(0)} 0v4`;
    return svg`<svg width="1918" height="27" viewBox="0 0 1918 27" shape-rendering="crispEdges"><path d="${p}" stroke="#fff"/></svg>`;
  }

  render() {
    const menu: [string, number][] = [["File", 34], ["Edit", 71.4], ["View", 111], ["Insert", 157], ["Format", 207], ["Drawing", 268.6], ["Window", 338], ["Help", 407]];
    const winGlyphs = html`
      <div><svg width="10" height="10" viewBox="0 0 10 10"><rect x="2" y="7" width="6" height="2" fill="#7f95b0"/></svg></div>
      <div><svg width="10" height="10" viewBox="0 0 10 10"><path d="M3 1h6v5M1 3.5h5.5V9H1z" fill="none" stroke="#7f95b0" stroke-width="1.4"/></svg></div>
      <div><svg width="10" height="10" viewBox="0 0 10 10"><path d="M1 1l8 8M9 1l-8 8" stroke="#7f95b0" stroke-width="2"/></svg></div>`;
    return html`<div class="app">
      <div class="title">
        <svg class="logo" width="18" height="22" viewBox="0 0 18 22"><path d="M3 21C0 14 4 10 6 6c1-2 2-4 5-6-1 4 1 6 3 8 3 4 3 9 0 13-1-5-3-7-5-8 0 3-1 6-6 8z" fill="#1c6fd8"/><path d="M6 15c0-4 2-6 4-9 0 4 2 5 3 8-2-2-4-2-7 1z" fill="#8fd0ff"/></svg>
        <span class="tt">TradeStation 8.1 - STOX_FIB - SITO Indici - [Chart Analysis - GS:STOXX50-DT  30 min  [EUREX] STOXX FUTURES]</span>
        <div class="wbtns">
          <div class="wb"><svg width="18" height="10" viewBox="0 0 18 10"><rect x="1" y="4" width="16" height="5" fill="#fff"/></svg></div>
          <div class="wb mx"><svg width="20" height="20" viewBox="0 0 20 20"><rect x="6.5" y="1.5" width="12" height="12" fill="none" stroke="#fff" stroke-width="1.6"/><rect x="2" y="5" width="13" height="13" fill="#8a99a8" stroke="#fff" stroke-width="2"/><rect x="6" y="9" width="5" height="5" fill="none" stroke="#fff" stroke-width="1.6"/></svg></div>
          <div class="wb cl"><svg width="20" height="18" viewBox="0 0 20 18"><path d="M3 1l7 6 7-6 2 3-6 5 6 5-2 3-7-6-7 6-2-3 6-5-6-5z" fill="#fff"/></svg></div>
        </div>
      </div>
      <div class="menu">
        <svg class="micon" width="19" height="19" viewBox="0 0 19 19" shape-rendering="crispEdges"><rect width="19" height="19" fill="#05070a"/><rect width="19" height="2" fill="#1a3cc0"/><path d="M2 12l3-4 2 3 2-6 2 5 3-4 3 3" fill="none" stroke="#20d040"/><path d="M2 16h15" stroke="#c03030"/></svg>
        ${menu.map(([t, x], i) => html`<span class="mi" style="margin-left:${i === 0 ? x : 0}px;width:${menu[i + 1] ? menu[i + 1][1] - x : 40}px">${t}</span>`)}
        <div class="mdi">
          <div class="mb"><svg width="10" height="10" viewBox="0 0 10 10"><rect x="2" y="7" width="6" height="2" fill="#55708f"/></svg></div>
          <div class="mb"><svg width="10" height="10" viewBox="0 0 10 10"><path d="M3 1h6v5M1 3.5h5.5V9H1z" fill="none" stroke="#55708f" stroke-width="1.4"/></svg></div>
          <div class="mb"><svg width="10" height="10" viewBox="0 0 10 10"><path d="M1 1l8 8M9 1l-8 8" stroke="#55708f" stroke-width="2"/></svg></div>
        </div>
      </div>
      <div class="toolbar">
        <div class="grip" style="margin-left:26px"></div>
        ${this.tbItems(toolbar, 28)}
        <div class="combo">Type a symbol/co<i></i></div>
        <div class="play"></div>
        ${this.tbItems(toolbar2, 477.5)}
        <span class="abc">abc</span>
      </div>
      <div class="chart">
        <div class="pane p1">${this.pricePane()}${this.legend(legend1)}
          <div class="sub">${winGlyphs}</div>
        </div>
        <div class="pane p2">${this.cciPane()}${this.legend(legend2)}</div>
        <div class="pane p3">${this.veloPane()}${this.legend(legend3)}</div>
        <div class="time">${this.timeTicks()}${dates.map((t) => html`<span>${t}</span>`)}</div>
      </div>
      <div class="scroll">
        <div class="tri l"></div>
        <div class="thumb"><i></i><i></i><i></i></div>
        <div class="tri r"></div>
      </div>
      <div class="tabs">
        <div class="nav">
          ${["M6 2v8M9 2L5 6l4 4", "M8 2L4 6l4 4", "M4 2l4 4-4 4", "M8 2v8M3 2l4 4-4 4"].map((p) => html`<b><svg width="12" height="12" viewBox="0 0 12 12"><path d="${p}" fill="none" stroke="#777" stroke-width="1.4"/></svg></b>`)}
        </div>
        ${tabs.map(([t, x], i) => {
          const next = tabs[i + 1] ? tabs[i + 1][1] : x + 84;
          return html`<div class="tab ${i === tabs.length - 1 ? "on" : ""}" style="width:${next - x - 11.75}px">${t}</div>`;
        })}
      </div>
      <div class="status">
        <div class="help">For Help, press F1</div>
        ${status.map(([t, x, c], i) => {
          const next = status[i + 1] ? status[i + 1][1] : 1920;
          return html`<div class="cell ${c === "dot" ? "" : c}" style="width:${next - x}px">${c === "dot" ? html`<div class="dotc"></div>` : t}</div>`;
        })}
      </div>
      <div class="foot"></div>
    </div>`;
  }
}
